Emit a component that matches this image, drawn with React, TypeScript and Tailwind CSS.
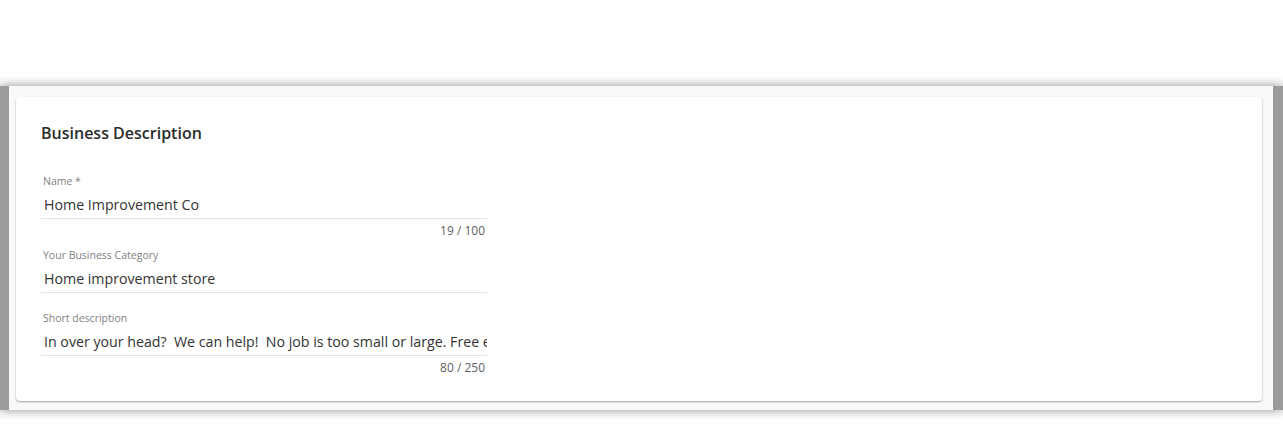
const fields = [
  { label: 'Name *', value: 'Home Improvement Co', count: '19 / 100' },
  { label: 'Your Business Category', value: 'Home improvement store' },
  {
    label: 'Short description',
    value:
      'In over your head?  We can help!  No job is too small or large. Free estimates.',
    count: '80 / 250',
  },
];

function Field({ label, value, count }: { label: string; value: string; count?: string }) {
  return (
    <div className={`flex w-[446px] flex-col ${count ? 'mb-[9px]' : 'mb-[18px]'}`}>
      <label className="pl-[2px] text-[10.5px] leading-[15px] text-[#808080]">{label}</label>
      <div className="overflow-hidden whitespace-pre border-b border-[#e3e3e3] pl-[3px] pt-[6px] pb-[3px] text-[14.2px] leading-[20px] text-[#333]">
        {value}
      </div>
      {count && (
        <div className="self-end pr-[2px] pt-[4px] text-[12px] leading-[16px] text-[#5f5f5f]">
          {count}
        </div>
      )}
    </div>
  );
}

export default function App() {
  return (
    <div className="h-[442px] w-full bg-white pt-[86px] font-['Open_Sans',sans-serif]">
      <div className="h-[324px] border-l-[9px] border-r-[10px] border-[#9b9b9b] bg-[#f8f9fa] pt-[11px] pl-[7px] pr-[11px] shadow-[0_0_10px_rgba(0,0,0,0.45)]">
        <div className="h-[304px] rounded-[4px] bg-white pl-[25px] pt-[25px] shadow-[0_1px_2px_rgba(0,0,0,0.35)]">
          <h2 className="mb-[30px] text-[16px] font-semibold leading-[22px] text-[#2b2b2b]">
            Business Description
          </h2>
          <div className="flex flex-col">
            {fields.map((f) => (
              <Field key={f.label} {...f} />
            ))}
          </div>
        </div>
      </div>
    </div>
  );
}
